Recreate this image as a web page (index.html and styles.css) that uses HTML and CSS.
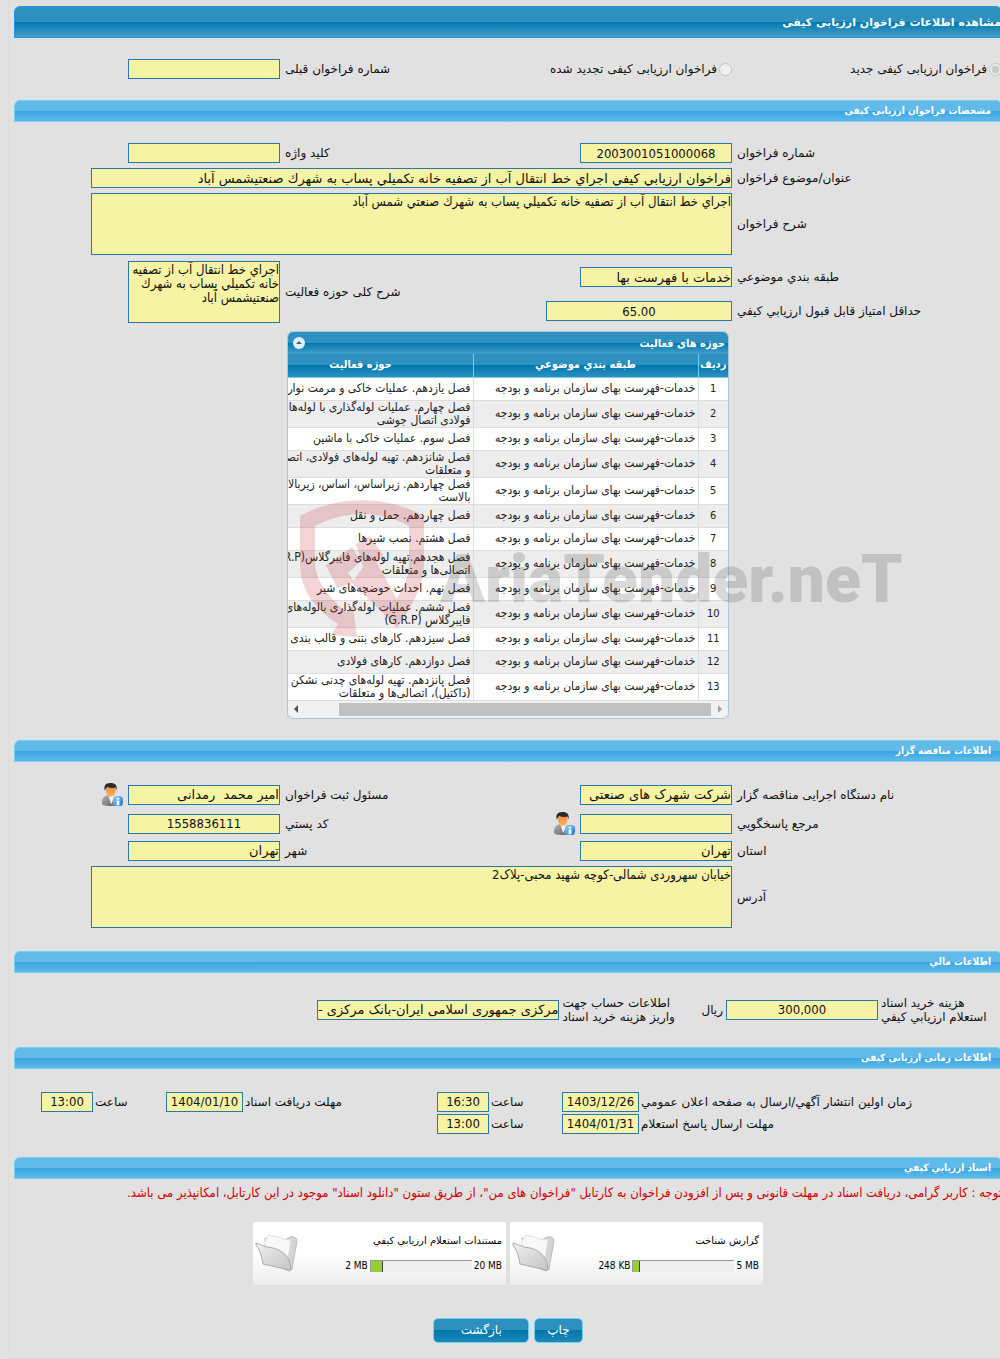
FILE: index.html
```html
<!DOCTYPE html>
<html lang="fa" dir="rtl">
<head>
    <meta charset="UTF-8">
    <meta name="viewport" content="width=device-width, initial-scale=1.0">
    <title>مشاهده اطلاعات فراخوان ارزیابی کیفی</title>
    <link rel="stylesheet" href="styles.css">
</head>
<body>

<!-- Shared icons -->
<svg class="defs" width="0" height="0" aria-hidden="true">
    <defs>
        <linearGradient id="suit" x1="0" y1="0" x2="1" y2="1">
            <stop offset="0" stop-color="#b4b4b4"/>
            <stop offset="1" stop-color="#5c5c5c"/>
        </linearGradient>
        <linearGradient id="face" x1="0" y1="0" x2="0" y2="1">
            <stop offset="0" stop-color="#f0803a"/>
            <stop offset="1" stop-color="#ffb25c"/>
        </linearGradient>
        <linearGradient id="badge" x1="0" y1="0" x2="1" y2="1">
            <stop offset="0" stop-color="#8fd0fa"/>
            <stop offset="1" stop-color="#1677cf"/>
        </linearGradient>
        <linearGradient id="front" x1="0" y1="0" x2="1" y2="1">
            <stop offset="0" stop-color="#f0f0f0"/>
            <stop offset="1" stop-color="#c4c4c4"/>
        </linearGradient>
        <symbol id="person" viewBox="0 0 24 26">
            <path d="M1 22c0-5 2-8 7-9h4c4 1 6 4 6 9 0 2-3 3-8 3s-9-1-9-3z" fill="url(#suit)"/>
            <path d="M8 13l3 10 4-9-3-2z" fill="#f4f4f4"/>
            <path d="M5 6c0-4 2-5 5-5s6 1 6 5c0 5-2 9-5 9S5 11 5 6z" fill="url(#face)"/>
            <path d="M4 8C3 3 5 0 10 0c5 0 8 2 7 8l-1-3c-4 1-7 0-9-1-1 1-2 2-3 4z" fill="#2b2b2b"/>
            <rect x="13" y="14" width="11" height="11" rx="4" fill="url(#badge)"/>
            <path d="M17 16h3v2h-3zM17 19h3v5h-3z" fill="#fff"/>
        </symbol>
        <symbol id="folder" viewBox="0 0 44 38">
            <path d="M10 4l18 3 7-4c4-1 7 1 7 4l-5 28-3 2L12 28z" fill="#d4d4d4" stroke="#bdbdbd"/>
            <path d="M9 8c3-4 4-5 5-7 5 2 9 1 14 4l8 1-4 24-20-12z" fill="#f8f8f8" stroke="#e0e0e0"/>
            <path d="M1 9c5 1 7 3 11 4 6 1 9 1 15 5 6 4 8 9 9 17 0 1-1 2-2 1L8 30c-1-6-2-12-7-19z" fill="url(#front)" stroke="#aaa"/>
        </symbol>
    </defs>
</svg>

<main class="page">
    <h1 class="title-bar">مشاهده اطلاعات فراخوان ارزیابی کیفی</h1>

    <form>
        <!-- Call type -->
        <div class="type-row">
            <label class="type-new"><input type="radio" name="type" checked disabled>فراخوان ارزیابی کیفی جدید</label>
            <label class="type-renewed"><input type="radio" name="type" disabled>فراخوان ارزیابی کیفی تجدید شده</label>
            <label for="prev-number" class="type-prev">شماره فراخوان قبلی</label>
            <div><input type="text" id="prev-number" class="field" readonly></div>
        </div>

        <h2 class="section-bar">مشخصات فراخوان ارزیابی کیفی</h2>
        <div class="form-grid call-grid">
            <label for="number">شماره فراخوان</label>
            <div><input type="text" id="number" class="field center" value="2003001051000068" readonly></div>
            <label for="keyword">کلید واژه</label>
            <div><input type="text" id="keyword" class="field" readonly></div>

            <label for="subject">عنوان/موضوع فراخوان</label>
            <div class="span"><input type="text" id="subject" class="field wide" value="فراخوان ارزيابي كيفي اجراي خط انتقال آب از تصفيه خانه تكميلي پساب به شهرك صنعتيشمس آباد" readonly></div>

            <label for="desc">شرح فراخوان</label>
            <div class="span"><textarea id="desc" class="field wide" readonly>اجراي خط انتقال آب از تصفيه خانه تكميلي پساب به شهرك صنعتي شمس آباد</textarea></div>

            <label for="category">طبقه بندي موضوعي</label>
            <div><input type="text" id="category" class="field" value="خدمات با فهرست بها" readonly></div>
            <label for="activity" class="two-rows">شرح کلی حوزه فعالیت</label>
            <div class="two-rows"><textarea id="activity" class="field" readonly>اجراي خط انتقال آب از تصفيه خانه تكميلي پساب به شهرك صنعتيشمس آباد</textarea></div>

            <label for="score">حداقل امتیاز قابل قبول ارزیابي کیفي</label>
            <div><input type="text" id="score" class="field score center" value="65.00" readonly></div>
        </div>

        <!-- Activity areas -->
        <div class="grid-box">
            <div class="grid-title">
                <h3>حوزه های فعالیت</h3>
                <button type="button" class="collapse" aria-label="بستن">
                    <svg viewBox="0 0 12 12" width="12" height="12"><circle cx="6" cy="6" r="6" fill="#e3eef6"/><path d="M3 7h6L6 4z" fill="#2a6f95"/></svg>
                </button>
            </div>
            <div class="grid-view">
                <table>
                    <thead>
                        <tr><th class="col-no">ردیف</th><th class="col-text">طبقه بندي موضوعي</th><th class="col-text">حوزه فعالیت</th></tr>
                    </thead>
                    <tbody>
                        <tr><td>1</td><td>خدمات-فهرست بهای سازمان برنامه و بودجه</td><td>فصل یازدهم. عملیات خاکی و مرمت نوار</td></tr>
                        <tr><td>2</td><td>خدمات-فهرست بهای سازمان برنامه و بودجه</td><td>فصل چهارم. عملیات لوله‌گذاری با لوله‌های<br>فولادی اتصال جوشی</td></tr>
                        <tr><td>3</td><td>خدمات-فهرست بهای سازمان برنامه و بودجه</td><td>فصل سوم. عملیات خاکی با ماشین</td></tr>
                        <tr><td>4</td><td>خدمات-فهرست بهای سازمان برنامه و بودجه</td><td>فصل شانزدهم. تهیه لوله‌های فولادی، اتصالی‌ها<br>و متعلقات</td></tr>
                        <tr><td>5</td><td>خدمات-فهرست بهای سازمان برنامه و بودجه</td><td>فصل چهاردهم. زیراساس، اساس، زیربالاست و<br>بالاست</td></tr>
                        <tr><td>6</td><td>خدمات-فهرست بهای سازمان برنامه و بودجه</td><td>فصل چهاردهم. حمل و نقل</td></tr>
                        <tr><td>7</td><td>خدمات-فهرست بهای سازمان برنامه و بودجه</td><td>فصل هشتم. نصب شیرها</td></tr>
                        <tr><td>8</td><td>خدمات-فهرست بهای سازمان برنامه و بودجه</td><td>فصل هجدهم.تهیه لوله‌های فایبرگلاس(G.R.P)،<br>اتصالی‌ها و متعلقات</td></tr>
                        <tr><td>9</td><td>خدمات-فهرست بهای سازمان برنامه و بودجه</td><td>فصل نهم. احداث حوضچه‌های شیر</td></tr>
                        <tr><td>10</td><td>خدمات-فهرست بهای سازمان برنامه و بودجه</td><td>فصل ششم. عملیات لوله‌گذاری بالوله‌های<br>فایبرگلاس (G.R.P)</td></tr>
                        <tr><td>11</td><td>خدمات-فهرست بهای سازمان برنامه و بودجه</td><td>فصل سیزدهم. کارهای بتنی و قالب بندی</td></tr>
                        <tr><td>12</td><td>خدمات-فهرست بهای سازمان برنامه و بودجه</td><td>فصل دوازدهم. کارهای فولادی</td></tr>
                        <tr><td>13</td><td>خدمات-فهرست بهای سازمان برنامه و بودجه</td><td>فصل پانزدهم. تهیه لوله‌های چدنی نشکن<br>(داکتیل)، اتصالی‌ها و متعلقات</td></tr>
                    </tbody>
                </table>
            </div>
            <div class="scroll-track">
                <span class="arrow arrow-right"></span>
                <span class="scroll-thumb"></span>
                <span class="arrow arrow-left"></span>
            </div>
        </div>

        <h2 class="section-bar">اطلاعات مناقصه گزار</h2>
        <div class="form-grid owner-grid">
            <label for="org">نام دستگاه اجرایی مناقصه گزار</label>
            <div><input type="text" id="org" class="field" value="شرکت شهرک های صنعتی" readonly></div>
            <label for="registrar">مسئول ثبت فراخوان</label>
            <div class="with-icon">
                <input type="text" id="registrar" class="field" value="امیر محمد  رمدانی" readonly>
                <button type="button" class="info" aria-label="مسئول ثبت فراخوان"><svg width="24" height="24"><use href="#person"/></svg></button>
            </div>

            <label for="contact">مرجع پاسخگویي</label>
            <div class="with-icon">
                <input type="text" id="contact" class="field" readonly>
                <button type="button" class="info" aria-label="مرجع پاسخگویي"><svg width="24" height="24"><use href="#person"/></svg></button>
            </div>
            <label for="postal">کد پستي</label>
            <div><input type="text" id="postal" class="field center" value="1558836111" readonly></div>

            <label for="province">استان</label>
            <div><input type="text" id="province" class="field" value="تهران" readonly></div>
            <label for="city">شهر</label>
            <div><input type="text" id="city" class="field" value="تهران" readonly></div>

            <label for="address">آدرس</label>
            <div class="span"><textarea id="address" class="field wide" readonly>خیابان سهروردی شمالی-کوچه شهید محبی-پلاک2</textarea></div>
        </div>

        <h2 class="section-bar">اطلاعات مالي</h2>
        <div class="money-row">
            <label for="cost" class="cost-label"><span>هزینه خرید اسناد<br>استعلام ارزیابي کیفي</span></label>
            <input type="text" id="cost" class="field center" value="300,000" readonly>
            <span>ریال</span>
            <label for="account" class="account-label"><span>اطلاعات حساب جهت<br>واریز هزینه خرید اسناد</span></label>
            <input type="text" id="account" class="field account" value="مرکزی جمهوری اسلامی ایران-بانک مرکزی - 4001" readonly>
        </div>

        <h2 class="section-bar">اطلاعات زمانی ارزیابی کیفی</h2>
        <div class="time-grid">
            <label for="d1">زمان اولین انتشار آگهي/ارسال به صفحه اعلان عمومي</label>
            <input type="text" id="d1" class="field center" value="1403/12/26" readonly>
            <label for="t1">ساعت</label>
            <input type="text" id="t1" class="field center" value="16:30" readonly>
            <label for="d2">مهلت دریافت اسناد</label>
            <input type="text" id="d2" class="field center" value="1404/01/10" readonly>
            <label for="t2">ساعت</label>
            <input type="text" id="t2" class="field center" value="13:00" readonly>
            <label for="d3" class="new-row">مهلت ارسال پاسخ استعلام</label>
            <input type="text" id="d3" class="field center" value="1404/01/31" readonly>
            <label for="t3">ساعت</label>
            <input type="text" id="t3" class="field center" value="13:00" readonly>
        </div>

        <h2 class="section-bar">اسناد ارزیابي کیفي</h2>
        <p class="notice">توجه : کاربر گرامی، دریافت اسناد در مهلت قانونی و پس از افزودن فراخوان به کارتابل "فراخوان های من"، از طریق ستون "دانلود اسناد" موجود در این کارتابل، امکانپذیر می باشد.</p>

        <div class="docs">
            <a href="#" class="doc">
                <span class="doc-info">
                    <span class="doc-name">گزارش شناخت</span>
                    <span class="doc-size">
                        <bdo dir="ltr">5 MB</bdo>
                        <span class="bar"><span class="bar-fill" style="width: 6%"></span></span>
                        <bdo dir="ltr">248 KB</bdo>
                    </span>
                </span>
                <svg width="44" height="38"><use href="#folder"/></svg>
            </a>
            <a href="#" class="doc">
                <span class="doc-info">
                    <span class="doc-name">مستندات استعلام ارزیابي کیفي</span>
                    <span class="doc-size">
                        <bdo dir="ltr">20 MB</bdo>
                        <span class="bar"><span class="bar-fill" style="width: 12%"></span></span>
                        <bdo dir="ltr">2 MB</bdo>
                    </span>
                </span>
                <svg width="44" height="38"><use href="#folder"/></svg>
            </a>
        </div>

        <div class="buttons">
            <button type="button" class="btn">چاپ</button>
            <button type="button" class="btn btn-back">بازگشت</button>
        </div>
    </form>

    <!-- Watermark over the page -->
    <div class="watermark" dir="ltr" aria-hidden="true">
        <svg width="130" height="140" viewBox="0 0 130 140">
            <g fill="#c4282d">
                <path d="M0 16C38-5 86-5 124 16v46c0 26-14 46-27 66L84 112c16-14 25-30 25-50V26C80 10 45 10 15 26v36c0 20 15 36 31 50l7-6 4 31-26-2 7-11C14 108 0 90 0 62z"/>
                <path d="M26 65l26-18 9 14-13 12 7 9-18 6z"/>
                <path d="M56 44l14-8 13 19-6 8 23 42-7 18-41-40 11-16z"/>
            </g>
        </svg>
        <span>AriaTender.neT</span>
    </div>
</main>

</body>
</html>
```
FILE: styles.css
```css
* {
    box-sizing: border-box;
}
body {
    margin: 0;
    padding-left: 8px;
    background-color: #e1e1e1;
    color: #111;
    font-family: "DejaVu Sans", Tahoma, sans-serif;
    font-size: 12px;
    overflow-x: hidden;
}
.defs {
    display: block;
}
.page {
    position: relative;
    padding: 6px 0 15px 5px;
    margin-right: -2px;
    border-left: 1px solid #dcdcdc;
    border-bottom: 1px solid #d6d6d6;
}
.title-bar {
    margin: 0;
    height: 32px;
    line-height: 32px;
    font-size: 11px;
    color: #fff;
    border: 1px solid #2b94e0;
    border-radius: 6px 6px 0 0;
    background: linear-gradient(#2e90be 50%, #0078ae 50%, #459fc9);
}
.section-bar {
    margin: 0;
    height: 22px;
    line-height: 20px;
    padding: 0 10px;
    font-family: "DejaVu Sans Condensed", Tahoma, sans-serif;
    font-size: 10px;
    color: #fff;
    border: 1px solid #72d0f5;
    border-radius: 6px 6px 0 0;
    background: linear-gradient(#62bae9 50%, #37a6e1 50%, #61b9e8);
}
/* Fields */
.field {
    display: block;
    width: 152px;
    height: 20px;
    margin: 0;
    padding: 0;
    border: 1px solid #2779aa;
    border-radius: 0;
    background-color: #f6f3a5;
    color: #111;
    font-family: inherit;
    font-size: 13px;
    outline: none;
}
.center {
    text-align: center;
    font-family: "DejaVu Sans Condensed", Tahoma, sans-serif;
}
textarea.field {
    height: 62px;
    padding: 1px 0;
    font-family: "DejaVu Sans Condensed", Tahoma, sans-serif;
    line-height: 14px;
    resize: none;
    overflow: hidden;
}
.wide {
    width: calc(100% - 77px);
}
.score {
    width: 186px;
}
/* Call type */
.type-row {
    display: grid;
    grid-template-columns: 265fr 187fr 255fr 266fr;
    align-items: center;
    height: 62px;
    column-gap: 5px;
}
.type-row input[type="radio"] {
    width: 13px;
    height: 13px;
    margin: 0 0 0 2px;
    vertical-align: middle;
}
.type-renewed {
    white-space: nowrap;
}
.type-prev {
    text-align: left;
}
/* Label and field pairs */
.form-grid {
    display: grid;
    grid-template-columns: 265fr 187fr 255fr 266fr;
    gap: 5px;
    align-items: center;
}
.form-grid label {
    text-align: left;
}
.span {
    grid-column: span 3;
}
.two-rows {
    grid-row: span 2;
}
.call-grid {
    grid-template-rows: 20px 20px 62px 34px 24px;
    padding-top: 21px;
}
.owner-grid {
    grid-template-rows: 24px 24px 20px 62px;
    padding: 21px 0 23px;
}
.with-icon {
    display: flex;
    align-items: center;
    gap: 4px;
}
.info {
    width: 24px;
    height: 24px;
    padding: 0;
    border: none;
    background: none;
    cursor: pointer;
}
/* Activity grid */
.grid-box {
    width: 442px;
    max-width: 100%;
    margin: 8px auto 21px;
    border: 1px solid #a6c9e2;
    border-radius: 6px;
    background-color: #f1f1f1;
    overflow: hidden;
}
.grid-title {
    display: flex;
    justify-content: space-between;
    align-items: center;
    height: 22px;
    padding: 0 3px 0 5px;
    color: #fff;
    background: linear-gradient(#2e90be 50%, #0078ae 50%, #459fc9);
}
.grid-title h3 {
    margin: 0;
    font-family: "DejaVu Sans Condensed", Tahoma, sans-serif;
    font-size: 11px;
}
.collapse {
    display: flex;
    padding: 0;
    border: none;
    background: none;
    cursor: pointer;
}
.grid-view {
    overflow: hidden;
}
table {
    width: 480px;
    table-layout: fixed;
    border-collapse: collapse;
    font-family: "DejaVu Sans Condensed", Tahoma, sans-serif;
}
.col-no {
    width: 30px;
}
.col-text {
    width: 225px;
}
th {
    height: 23px;
    padding: 0;
    font-size: 11px;
    line-height: 16px;
    color: #fff;
    border-left: 1px solid #72d0f5;
    border-bottom: 1px solid #72d0f5;
    background: linear-gradient(#2e90be 50%, #0078ae 50%, #2e90be);
}
td {
    height: 23px;
    padding: 0 2px;
    font-size: 12px;
    line-height: 13px;
    color: #222;
    white-space: nowrap;
    border-left: 1px solid #ddd;
    border-bottom: 1px solid #ddd;
}
td:first-child {
    text-align: center;
    font-size: 11px;
}
tbody tr {
    background-color: #fff;
}
tbody tr:nth-child(even) {
    background-color: #ededed;
}
.scroll-track {
    display: flex;
    align-items: center;
    height: 17px;
    padding: 0 6px;
}
.scroll-thumb {
    width: 372px;
    height: 13px;
    margin: 0 7px 0 auto;
    background-color: #c1c1c1;
}
.arrow {
    border: 4px solid transparent;
}
.arrow-right {
    border-right-width: 0;
    border-left-color: #a3a3a3;
}
.arrow-left {
    border-left-width: 0;
    border-right-color: #505050;
}
/* Financial */
.money-row {
    display: flex;
    align-items: center;
    height: 74px;
    gap: 3px;
    line-height: 14px;
}
.cost-label {
    display: flex;
    justify-content: flex-end;
    width: 121px;
}
.account-label {
    display: flex;
    justify-content: flex-end;
    width: 136px;
}
.cost-label span,
.account-label span {
    text-align: right;
    white-space: nowrap;
}
.cost-label span,
.account-label span {
    text-align: left;
}
.account {
    width: 242px;
}
/* Times */
.time-grid {
    display: grid;
    grid-template-columns: 361fr 77px 69fr 52px 190fr 77px 69fr 52px 25fr;
    gap: 2px;
    align-items: center;
    padding: 23px 0;
}
.time-grid label {
    text-align: left;
}
.time-grid .field {
    width: auto;
    min-width: 0;
}
.new-row {
    grid-column: 1;
}
/* Documents */
.notice {
    margin: 6px 0 0;
    font-family: "DejaVu Sans Condensed", Tahoma, sans-serif;
    font-size: 13px;
    line-height: 15px;
    color: #d40000;
    white-space: nowrap;
}
.docs {
    display: flex;
    justify-content: center;
    gap: 4px;
    margin-top: 22px;
}
.doc {
    display: flex;
    justify-content: space-between;
    align-items: center;
    width: 253px;
    height: 63px;
    padding: 0 4px 0 2px;
    color: #000;
    font-size: 10px;
    text-decoration: none;
    background: linear-gradient(#fff 50%, #ececec);
}
.doc-info {
    display: flex;
    flex-direction: column;
    gap: 14px;
}
.doc-size {
    display: flex;
    align-items: center;
    gap: 2px;
    font-family: "DejaVu Sans Condensed", Tahoma, sans-serif;
}
.bar {
    display: flex;
    justify-content: flex-end;
    width: 102px;
    height: 12px;
    border-top: 1px solid #999;
    border-left: 1px solid #999;
    background-color: #eee;
}
.bar-fill {
    background-color: #9acd32;
    border-right: 1px solid #444;
}
/* Buttons */
.buttons {
    display: flex;
    justify-content: center;
    gap: 5px;
    margin-top: 33px;
}
.btn {
    height: 25px;
    padding: 0 12px;
    font-family: inherit;
    font-size: 12px;
    color: #fff;
    border: 1px solid #72d0f5;
    border-radius: 5px;
    background: linear-gradient(#2e90be 50%, #0078ae 50%, #1f86b8);
    cursor: pointer;
}
.btn-back {
    width: 96px;
}
/* Watermark */
.watermark {
    position: absolute;
    top: 500px;
    left: 291px;
    display: flex;
    align-items: center;
    gap: 10px;
    opacity: 0.2;
    pointer-events: none;
}
.watermark span {
    padding-top: 20px;
    color: #444;
    font-family: Roboto, sans-serif;
    font-size: 66px;
    line-height: 80px;
    font-weight: 900;
}
```
